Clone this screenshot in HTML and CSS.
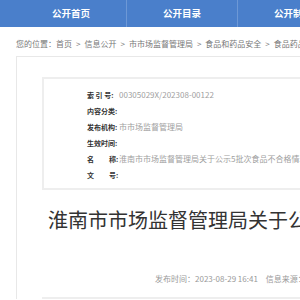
FILE: index.html
```html
<!DOCTYPE html>
<html lang="zh-CN">
<head>
<meta charset="utf-8">
<title>淮南市市场监督管理局</title>
<link rel="stylesheet" href="styles.css">
</head>
<body>
<div class="page">
  <div class="nav">
    <div class="nav-inner">
      <a class="nav-item">公开首页</a>
      <a class="nav-item">公开目录</a>
      <a class="nav-item">公开制度</a>
      <a class="nav-item">公开指南</a>
    </div>
  </div>
  <div class="crumb">您的位置：首页<span class="sep">&gt;</span>信息公开<span class="sep">&gt;</span>市市场监督管理局<span class="sep">&gt;</span>食品和药品安全<span class="sep">&gt;</span>食品药品监督抽检</div>
  <div class="main">
    <div class="meta">
      <div class="row"><span class="label">索 引 号:</span><span class="value">00305029X/202308-00122</span></div>
      <div class="row"><span class="label">内容分类:</span><span class="value"></span></div>
      <div class="row"><span class="label">发布机构:</span><span class="value">市市场监督管理局</span></div>
      <div class="row"><span class="label">生效时间:</span><span class="value"></span></div>
      <div class="row"><span class="label"><span class="sp">名称</span>:</span><span class="value">淮南市市场监督管理局关于公示5批次食品不合格情况的通告</span></div>
      <div class="row"><span class="label"><span class="sp">文号</span>:</span><span class="value"></span></div>
    </div>
    <h1 class="title">淮南市市场监督管理局关于公示5批次食品不合格情况的通告</h1>
    <div class="info">发布时间：2023-08-29 16:41<span class="gap"></span>信息来源：市市场监督管理局</div>
    <div class="rule"></div>
  </div>
</div>
</body>
</html>
```
FILE: styles.css
```css
html, body {
  margin: 0;
  padding: 0;
  background: #fff;
  overflow: hidden;
}
body {
  font-family: "Noto Sans CJK SC", "Noto Sans", sans-serif;
  color: #333;
}
.page {
  width: 1100px;
}
.nav {
  height: 27px;
  background: #4a7fcb;
}
.nav-inner {
  display: flex;
  margin-left: 16px;
  height: 100%;
}
.nav-item {
  width: 110px;
  border-right: 1px solid #6d98d6;
  color: #fff;
  font-weight: bold;
  font-size: 9.5px;
  line-height: 27px;
  text-align: center;
}
.crumb {
  padding: 12px 0 0 16px;
  height: 17px;
  font-size: 8px;
  line-height: 10px;
  color: #777;
  white-space: nowrap;
}
.sep {
  display: inline-block;
  margin: 0 4px;
}
.main {
  margin-left: 16px;
  border-left: 1px solid #e8e8e8;
  border-top: 1px solid #e8e8e8;
  padding: 20px 0 0 25px;
}
.meta {
  border: 2px solid #eee;
  padding: 8px 0 5px 43px;
}
.row {
  display: flex;
  height: 16px;
  line-height: 16px;
  white-space: nowrap;
}
.label {
  display: flex;
  width: 32px;
  font-size: 7px;
  font-weight: bold;
  color: #333;
}
.sp {
  display: inline-block;
  width: 29px;
  text-align-last: justify;
}
.value {
  font-size: 8px;
  color: #a0a0a0;
}
.title {
  margin: 18px 0 0 6px;
  font-size: 20px;
  line-height: 24px;
  font-weight: normal;
  color: #333;
  white-space: nowrap;
}
.info {
  margin: 42px 0 0 113px;
  font-size: 8px;
  line-height: 10px;
  color: #999;
  white-space: nowrap;
}
.gap {
  display: inline-block;
  width: 8px;
}
.rule {
  margin-top: 13px;
  border-top: 2px solid #eee;
}
```
